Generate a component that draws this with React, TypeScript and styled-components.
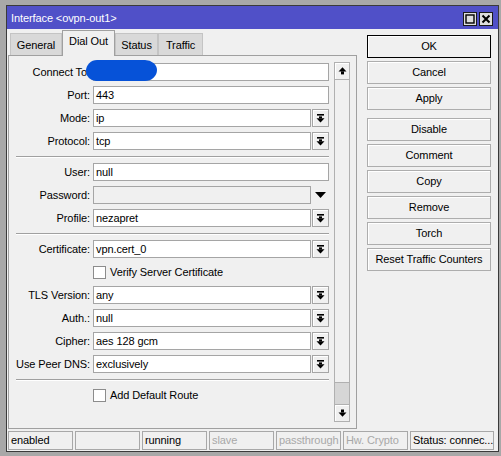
import React from 'react'
import styled, { createGlobalStyle } from 'styled-components'

const GlobalStyle = createGlobalStyle`
  html, body {
    margin: 0;
    padding: 0;
    background: #a8a8a8;
    overflow: hidden;
  }
  body {
    font-family: "Liberation Sans", Arial, sans-serif;
    font-size: 11px;
    letter-spacing: -0.1px;
    color: #000;
  }
`

const Screen = styled.div`
  padding: 5px 0 0 6px;
`

const Window = styled.div`
  width: 493px;
  height: 447px;
  box-sizing: border-box;
  border: 1px solid #3a3a3a;
  background: #f0f0f0;
  display: flex;
  flex-direction: column;
`

const TitleBar = styled.div`
  height: 23px;
  flex: none;
  background: #5050c8;
  color: #fff;
  display: flex;
  align-items: center;
  padding: 0 5px 0 4px;
`

const TitleText = styled.div`
  flex: 1;
  font-size: 11px;
`

const TitleButtons = styled.div`
  display: flex;
  gap: 2px;
  margin-top: 2px;
`

const TitleBtn = styled.div`
  width: 14px;
  height: 14px;
  box-sizing: border-box;
  border: 1px solid #1a1a1a;
  background: #dedede;
  display: flex;
  align-items: center;
  justify-content: center;
`

const Main = styled.div`
  flex: 1;
  display: flex;
  padding-top: 1px;
  min-height: 0;
`

const LeftCol = styled.div`
  margin-left: 1px;
  width: 349px;
  display: flex;
  flex-direction: column;
`

const TabsRow = styled.div`
  height: 25px;
  display: flex;
  align-items: flex-end;
  padding-left: 2px;
`

const Tab = styled.div<{ $active?: boolean; $w: number }>`
  width: ${({ $w }) => $w}px;
  height: ${({ $active }) => ($active ? 26 : 22)}px;
  margin-bottom: ${({ $active }) => ($active ? -1 : 0)}px;
  box-sizing: border-box;
  position: relative;
  z-index: ${({ $active }) => ($active ? 1 : 0)};
  background: ${({ $active }) => ($active ? '#f0f0f0' : '#d9d9d9')};
  border: 1px solid ${({ $active }) => ($active ? '#a0a0a0' : '#c4c4c4')};
  border-bottom: none;
  text-align: center;
  line-height: ${({ $active }) => ($active ? 21 : 22)}px;
`

const Panel = styled.div`
  flex: 1;
  position: relative;
  display: flex;
  border: 1px solid #a0a0a0;
`

const Form = styled.div`
  width: 325px;
  box-sizing: border-box;
  padding: 7px 5px 0 0;
  display: flex;
  flex-direction: column;
`

const Row = styled.div`
  height: 18px;
  margin-bottom: 5px;
  display: flex;
  align-items: center;
`

const Label = styled.div`
  width: 84px;
  box-sizing: border-box;
  padding-right: 3px;
  text-align: right;
  white-space: nowrap;
`

const Field = styled.div<{ $w: number; $disabled?: boolean }>`
  width: ${({ $w }) => $w}px;
  height: 18px;
  box-sizing: border-box;
  border: 1px solid #a5a5a5;
  background: ${({ $disabled }) => ($disabled ? '#f0f0f0' : '#fff')};
  padding-left: 2px;
  line-height: 16px;
  white-space: nowrap;
  overflow: hidden;
`

const DropBtn = styled.div`
  width: 17px;
  height: 18px;
  margin-left: 1px;
  box-sizing: border-box;
  border: 1px solid #a5a5a5;
  box-shadow: inset 1px 1px #fff;
  background: #f0f0f0;
  display: flex;
  align-items: center;
  justify-content: center;
`

const PlainArrow = styled.div`
  width: 18px;
  height: 18px;
  display: flex;
  align-items: center;
  justify-content: center;
`

const CheckRow = styled.div`
  height: 18px;
  margin-bottom: 5px;
  padding-left: 84px;
  display: flex;
  align-items: center;
`

const CheckBox = styled.div`
  width: 13px;
  height: 13px;
  box-sizing: border-box;
  border: 1px solid #8c8c8c;
  background: #fff;
  margin-right: 4px;
`

const Separator = styled.div`
  height: 0;
  border-top: 1px solid #a0a0a0;
  border-bottom: 1px solid #fff;
  margin: 1px 0 5px 7px;
`

const ScrollBar = styled.div`
  width: 16px;
  margin: 6px 0 6px 0;
  box-sizing: border-box;
  border: 1px solid #b0b0b0;
  background: #f0f0f0;
  display: flex;
  flex-direction: column;
`

const ScrollBtn = styled.div`
  height: 16px;
  flex: none;
  display: flex;
  align-items: center;
  justify-content: center;
  background: #f0f0f0;
  box-shadow: inset 1px 1px #fff;
`

const ScrollTrack = styled.div`
  flex: 1;
  border-top: 1px solid #b0b0b0;
`

const ScrollThumb = styled.div`
  height: 21px;
  background: #d6d6d6;
  border-top: 1px solid #b0b0b0;
  border-bottom: 1px solid #b0b0b0;
`

const Redaction = styled.div`
  position: absolute;
  left: 77px;
  top: 4px;
  width: 71px;
  height: 21px;
  background: #0652d8;
  border-radius: 11px 12px 12px 10px / 11px 10px 11px 10px;
`

const RightCol = styled.div`
  margin-left: 10px;
  width: 124px;
  padding-top: 5px;
  display: flex;
  flex-direction: column;
`

const Button = styled.div<{ $default?: boolean; $gapAfter?: boolean }>`
  height: 23px;
  box-sizing: border-box;
  border: 1px solid ${({ $default }) => ($default ? '#000' : '#adadad')};
  box-shadow: inset 1px 1px #fff;
  background: #f0f0f0;
  margin-bottom: ${({ $gapAfter }) => ($gapAfter ? 8 : 3)}px;
  padding-bottom: 2px;
  display: flex;
  align-items: center;
  justify-content: center;
  white-space: nowrap;
`

const StatusBar = styled.div`
  flex: none;
  display: flex;
  gap: 2px;
  padding: 2px 0 1px 1px;
`

const Cell = styled.div<{ $muted?: boolean; $w?: number }>`
  width: ${({ $w }) => $w ?? 65}px;
  height: 19px;
  box-sizing: border-box;
  border: 1px solid #a8a8a8;
  padding-left: 2px;
  line-height: 17px;
  white-space: nowrap;
  overflow: hidden;
  color: ${({ $muted }) => ($muted ? '#a8a8a8' : '#000')};
`

const BarDown = () => (
  <svg width="9" height="9" viewBox="0 0 9 9">
    <rect x="1" y="0" width="7" height="1.6" fill="#000" />
    <rect x="3" y="2.4" width="3" height="2" fill="#000" />
    <polygon points="0.5,4.2 8.5,4.2 4.5,8.6" fill="#000" />
  </svg>
)

const Triangle = () => (
  <svg width="11" height="6" viewBox="0 0 11 6">
    <polygon points="0,0 11,0 5.5,6" fill="#000" />
  </svg>
)

const ArrowUp = () => (
  <svg width="9" height="8" viewBox="0 0 9 8">
    <polygon points="0.5,4.5 8.5,4.5 4.5,0.3" fill="#000" />
    <rect x="3" y="4.4" width="3" height="3" fill="#000" />
  </svg>
)

const ArrowDown = () => (
  <svg width="9" height="8" viewBox="0 0 9 8">
    <rect x="3" y="0.5" width="3" height="3" fill="#000" />
    <polygon points="0.5,3.4 8.5,3.4 4.5,7.7" fill="#000" />
  </svg>
)

type Item =
  | { kind: 'text'; label: string; value: string }
  | { kind: 'select'; label: string; value: string }
  | { kind: 'disabled'; label: string }
  | { kind: 'check'; label: string }
  | { kind: 'sep' }

const items: Item[] = [
  { kind: 'text', label: 'Connect To:', value: '' },
  { kind: 'text', label: 'Port:', value: '443' },
  { kind: 'select', label: 'Mode:', value: 'ip' },
  { kind: 'select', label: 'Protocol:', value: 'tcp' },
  { kind: 'sep' },
  { kind: 'text', label: 'User:', value: 'null' },
  { kind: 'disabled', label: 'Password:' },
  { kind: 'select', label: 'Profile:', value: 'nezapret' },
  { kind: 'sep' },
  { kind: 'select', label: 'Certificate:', value: 'vpn.cert_0' },
  { kind: 'check', label: 'Verify Server Certificate' },
  { kind: 'select', label: 'TLS Version:', value: 'any' },
  { kind: 'select', label: 'Auth.:', value: 'null' },
  { kind: 'select', label: 'Cipher:', value: 'aes 128 gcm' },
  { kind: 'select', label: 'Use Peer DNS:', value: 'exclusively' },
  { kind: 'sep' },
  { kind: 'check', label: 'Add Default Route' },
]

const buttons = [
  { label: 'OK', def: true },
  { label: 'Cancel' },
  { label: 'Apply', gap: true },
  { label: 'Disable' },
  { label: 'Comment' },
  { label: 'Copy' },
  { label: 'Remove' },
  { label: 'Torch' },
  { label: 'Reset Traffic Counters' },
]

const tabs = [
  { label: 'General', w: 52 },
  { label: 'Dial Out', w: 53, active: true },
  { label: 'Status', w: 43 },
  { label: 'Traffic', w: 45 },
]

const renderItem = (item: Item, i: number) => {
  switch (item.kind) {
    case 'sep':
      return <Separator key={i} />
    case 'check':
      return (
        <CheckRow key={i}>
          <CheckBox />
          {item.label}
        </CheckRow>
      )
    case 'text':
      return (
        <Row key={i}>
          <Label>{item.label}</Label>
          <Field $w={236}>{item.value}</Field>
        </Row>
      )
    case 'disabled':
      return (
        <Row key={i}>
          <Label>{item.label}</Label>
          <Field $w={218} $disabled />
          <PlainArrow>
            <Triangle />
          </PlainArrow>
        </Row>
      )
    case 'select':
      return (
        <Row key={i}>
          <Label>{item.label}</Label>
          <Field $w={218}>{item.value}</Field>
          <DropBtn>
            <BarDown />
          </DropBtn>
        </Row>
      )
  }
}

export default function App() {
  return (
    <Screen>
      <GlobalStyle />
      <Window>
        <TitleBar>
          <TitleText>Interface &lt;ovpn-out1&gt;</TitleText>
          <TitleButtons>
            <TitleBtn>
              <svg width="10" height="10" viewBox="0 0 10 10">
                <rect x="1" y="1" width="8" height="8" fill="none" stroke="#000" strokeWidth="1.4" />
              </svg>
            </TitleBtn>
            <TitleBtn>
              <svg width="10" height="10" viewBox="0 0 10 10">
                <path d="M1.5 1.5 L8.5 8.5 M8.5 1.5 L1.5 8.5" stroke="#000" strokeWidth="2" />
              </svg>
            </TitleBtn>
          </TitleButtons>
        </TitleBar>
        <Main>
          <LeftCol>
            <TabsRow>
              {tabs.map((t) => (
                <Tab key={t.label} $w={t.w} $active={t.active}>
                  {t.label}
                </Tab>
              ))}
            </TabsRow>
            <Panel>
              <Form>{items.map(renderItem)}</Form>
              <ScrollBar>
                <ScrollBtn>
                  <ArrowUp />
                </ScrollBtn>
                <ScrollTrack />
                <ScrollThumb />
                <ScrollBtn>
                  <ArrowDown />
                </ScrollBtn>
              </ScrollBar>
              <Redaction />
            </Panel>
          </LeftCol>
          <RightCol>
            {buttons.map((b) => (
              <Button key={b.label} $default={b.def} $gapAfter={b.gap}>
                {b.label}
              </Button>
            ))}
          </RightCol>
        </Main>
        <StatusBar>
          <Cell>enabled</Cell>
          <Cell />
          <Cell>running</Cell>
          <Cell $muted>slave</Cell>
          <Cell $muted>passthrough</Cell>
          <Cell $muted>Hw. Crypto</Cell>
          <Cell $w={84}>Status: connec...</Cell>
        </StatusBar>
      </Window>
    </Screen>
  )
}
